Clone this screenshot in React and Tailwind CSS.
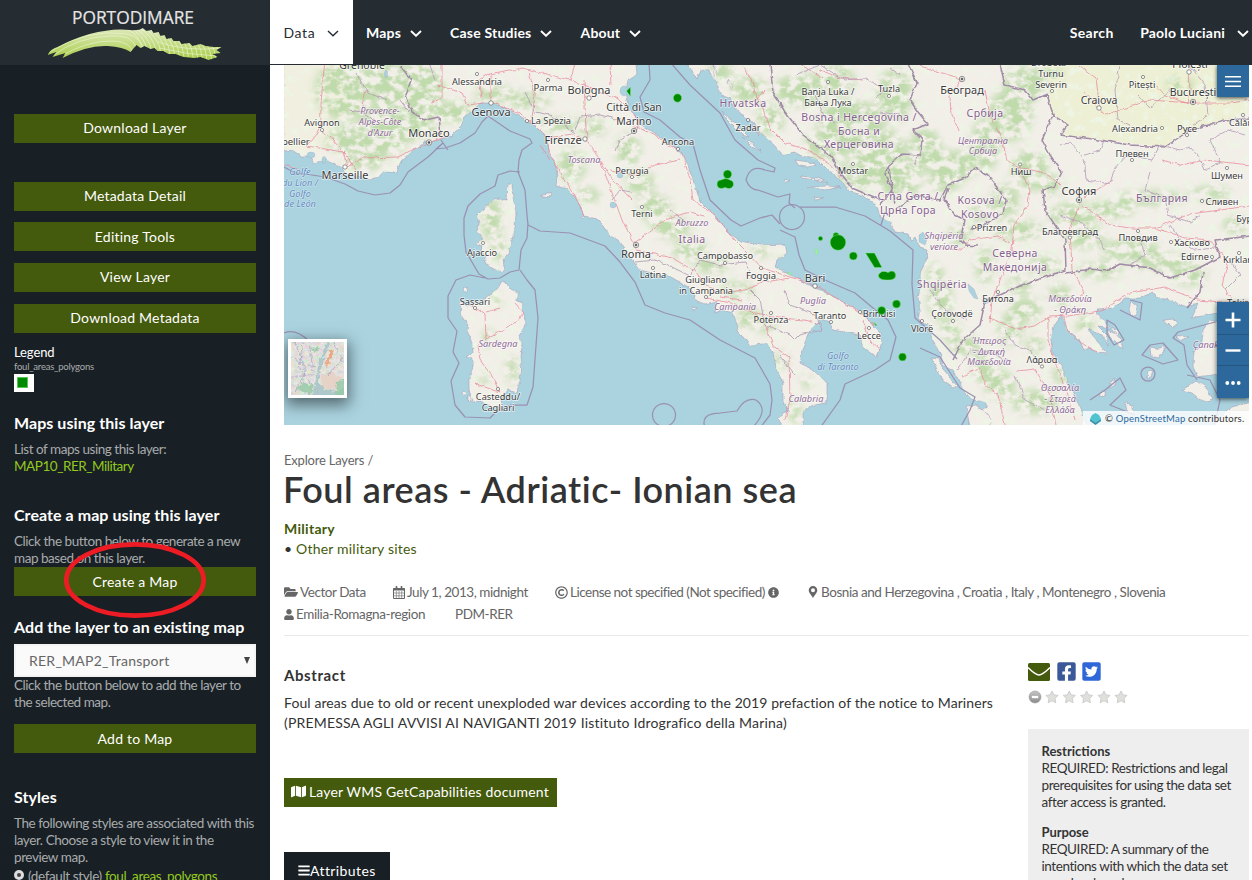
import React from "react";
import {
  FaFolderOpen, FaRegCopyright, FaInfoCircle, FaMap, FaFacebookSquare, FaTwitterSquare, FaBars, FaUser,
} from "react-icons/fa";

const LAND =
  "M284 60L284 151L292 150L301 156L309 156L314 163L325 160L334 164L341 166L347 174L356 177L371 179L378 177L384 172L397 172L401 161L410 153L417 147L424 142L431 142L451 136L460 127L466 116L481 103L492 103L504 107L517 114L527 121L534 126L544 134L548 144L549 154L554 161L556 167L557 177L556 186L567 189L574 196L581 207L584 216L597 219L604 226L610 236L618 240L623 248L630 257L640 270L652 273L660 278L667 275L680 282L688 287L695 294L694 299L705 304L717 301L715 313L722 310L733 313L738 327L737 331L743 337L750 346L767 343L773 352L776 368L783 383L783 403L790 410L777 418L782 426L803 426L803 412L813 405L827 403L827 383L813 370L800 363L802 350L810 330L820 320L829 321L833 330L860 335L863 347L877 357L882 343L880 333L860 312L840 300L813 287L790 275L775 267L777 261L787 253L785 244L760 245L740 241L727 231L713 214L700 201L690 171L684 156L678 151L663 139L640 124L628 106L625 91L627 80L637 74L636 64L636 60ZM685 60L690 68L697 80L701 70L709 71L716 83L722 95L730 97L733 105L744 117L754 122L760 133L773 144L783 155L794 153L806 157L818 160L830 172L841 180L849 191L864 196L877 206L880 217L890 222L895 232L908 234L911 241L915 237L920 247L928 251L926 261L920 273L921 287L918 297L920 310L918 318L922 323L930 326L932 340L941 355L943 365L953 371L960 383L963 390L973 400L985 402L988 408L975 409L968 419L970 428L1087 428L1083 415L1078 404L1074 393L1068 382L1062 367L1052 351L1051 338L1054 326L1062 315L1066 329L1079 339L1084 350L1090 348L1097 353L1107 354L1097 341L1088 329L1101 334L1108 345L1107 335L1098 326L1111 328L1120 342L1118 332L1107 325L1098 315L1097 309L1113 308L1125 298L1140 298L1153 292L1159 298L1170 300L1184 307L1198 304L1192 318L1217 313L1252 300L1252 60ZM1252 323L1210 321L1203 331L1202 343L1194 352L1193 366L1197 377L1212 375L1230 372L1252 374ZM1213 428L1227 410L1232 407L1252 402L1252 428Z";
const CORSICA =
  "M508 184L512 184L513 200L516 212L515 227L512 240L509 252L504 259L505 267L501 272L492 268L484 261L486 256L481 251L482 246L476 243L483 239L477 231L479 224L477 216L483 210L491 201L500 199L507 200Z";
const SARDINIA =
  "M502 281L508 283L510 289L518 292L517 301L523 303L522 311L526 323L519 335L522 342L521 358L520 379L517 393L508 390L501 399L502 406L493 408L481 401L472 402L469 388L469 378L473 367L473 359L466 357L473 352L472 341L467 331L468 322L460 316L461 300L466 306L478 304L490 295L498 288Z";
const ISLANDS =
  "M464 287l3 0l-1 6l-3 -3zM463 391l3 2l-2 3l-2 -3zM468 395l3 2l0 6l-3 -3zM540 196l6 -3l6 0l-1 4l-8 -1zM580 217l4 -1l0 3zM692 307l5 1l-3 2zM931 358l8 1l3 9l8 9l7 9l-4 2l-10 -7l-6 -12zM966 406l11 -1l9 8l6 8l-4 7h-18zM1107 330l9 4l5 6l2 9l-6 -5l-7 -7zM1131 302l6 3l0 8l-6 3l-2 -7zM1164 320l10 -1l4 4l-5 4l-7 -4zM1150 348l6 1l8 -3l0 6l-5 6l-8 -2zM1148 371l5 1l-2 5l-4 1zM1175 337l9 -2l4 2l-7 4zM1182 390l14 -9l10 6l7 12l-10 3l-11 -9zM1125 402l8 5l1 7l-7 -3zM1110 383l5 -5l0 5l-5 6zM1099 394l5 -3l2 3l-5 3zM795 160l14 2l7 3l-8 2l-9 -1zM783 180l7 -1l-5 4zM800 176l18 2l10 5l-12 -3l-15 -2zM808 187l19 -1l13 1l-15 3zM814 196l10 2l-8 2zM713 64l5 11l0 8l-4 -8zM728 79l5 7l-1 3l-5 -7zM722 111l14 13l13 13l-7 -2l-14 -14zM742 137l11 7l8 7l-9 -4z";

const GREENS = [
  [345, 90, 30, 30], [390, 85, 30, 22], [420, 90, 24, 26], [385, 130, 28, 24], [350, 140, 25, 14], [365, 160, 22, 10], [415, 125, 22, 15],
  [455, 112, 22, 10], [495, 94, 20, 8], [530, 100, 20, 9], [562, 125, 24, 7], [572, 165, 14, 16], [585, 195, 16, 7], [592, 128, 14, 8],
  [628, 150, 12, 16], [640, 182, 14, 12], [655, 208, 16, 14], [672, 228, 20, 10], [690, 250, 18, 9], [712, 265, 18, 8], [738, 290, 16, 8],
  [748, 318, 12, 10], [766, 325, 9, 8], [782, 360, 6, 8], [807, 382, 5, 7], [795, 412, 6, 12], [760, 252, 10, 5], [785, 262, 6, 6],
  [492, 220, 10, 22], [500, 250, 8, 12], [496, 300, 6, 6], [488, 338, 6, 8], [512, 370, 6, 14], [484, 380, 5, 6],
  [720, 72, 12, 10], [750, 90, 18, 14], [770, 120, 14, 14], [800, 90, 26, 16], [835, 80, 20, 14], [850, 120, 34, 20], [830, 145, 26, 14],
  [880, 150, 26, 22], [860, 175, 24, 14], [900, 180, 20, 20], [895, 95, 18, 26], [925, 150, 16, 22], [955, 165, 24, 14], [945, 180, 16, 12],
  [985, 145, 14, 26], [1010, 115, 22, 26], [1024, 85, 20, 18], [1045, 75, 18, 8], [1030, 170, 18, 20], [1005, 200, 14, 16],
  [1018, 230, 24, 10], [980, 212, 10, 10], [960, 235, 12, 10], [985, 265, 9, 18], [1050, 185, 12, 10], [1075, 215, 26, 12],
  [1110, 210, 24, 9], [1150, 198, 34, 7], [1210, 193, 22, 6], [1085, 238, 20, 10], [1130, 250, 30, 10], [1160, 262, 30, 8],
  [1100, 270, 22, 8], [1190, 275, 18, 10], [1045, 265, 18, 8], [1020, 285, 12, 9], [1025, 310, 16, 12], [1010, 330, 12, 16],
  [965, 345, 14, 10], [985, 365, 12, 18], [1000, 385, 15, 14], [1035, 345, 8, 10], [1062, 375, 10, 8], [1035, 402, 24, 12],
  [1060, 295, 12, 10], [1085, 325, 9, 9], [1235, 225, 12, 8], [1180, 85, 14, 8], [940, 300, 12, 20], [935, 275, 8, 12], [950, 330, 10, 10],
];

const ROADS =
  "M325 60C322 90 320 110 321 122C318 134 312 141 307 146L343 152L347 166L363 158L398 157L418 147L444 137M320 130L330 136L345 155M345 154L356 170M363 107L366 90M442 64L442 98L431 103M437 85L462 93L468 105L483 103L479 80L491 72L491 102L520 113L530 122L545 135L550 153L558 170L573 192L584 215M491 75L522 68L570 80L587 86L620 100L632 112L640 125M584 80L586 130L588 142L600 160L611 190L622 220L634 243M548 138L572 134L586 140M532 118L535 95L529 72M575 64L570 80M610 62L611 86M600 160L613 180L632 200M632 125L655 135L668 145L682 152L690 180L693 200L714 215L735 240L750 255L762 268L790 277L812 284L845 303L862 315L875 326M636 250L672 258L695 271L706 285L720 293L745 290L765 282L790 278M634 243L650 232L665 220L690 212L705 216M706 298L730 303L752 312L765 324L773 346L789 357L790 400L785 420M720 297L742 300M755 313L792 319L805 320L820 324M863 320L870 341L880 350M611 170L635 175L655 165L680 160M744 66L752 82L756 96L765 112L770 128L785 143L808 150L830 164L842 178M765 90L752 104M760 136L752 124M820 70L840 78L863 80M800 64L822 78M920 66L962 79L950 95L951 115L959 130M985 90L990 115L1001 135L1007 160L1020 170L1030 190L1028 205L1014 225L1012 250L1004 270L992 300L990 322M1018 167L1045 173L1060 184M1010 243L998 236L970 240L961 250L940 248M1084 92L1105 115L1150 100L1190 103L1230 103L1252 100M1100 110L1096 78L1080 66M1154 83L1165 95L1188 104L1190 90L1189 65M1080 200L1113 180M1080 202L1070 230L1072 270L1085 292L1078 298M1082 205L1110 225L1130 228L1155 228L1190 214L1250 206M1155 228L1185 238L1210 240L1228 262L1222 285L1232 300M990 318L1016 329L1034 326L1050 317L1068 316L1100 311L1130 293L1165 287L1197 300L1222 302M1048 317L1048 340L1058 370L1070 400L1075 420M1063 312L1067 330L1080 342L1096 352M963 376L980 368L985 385L998 395L1005 425M1017 371L1035 369L1050 395L1056 425M1162 160L1180 165L1205 160L1250 165M470 305L485 314L486 340L497 333L519 320L523 312L515 303M478 345L480 360L496 382L500 392L475 384M486 312L500 308M540 145L550 160M300 170L285 165";

const BORDERS =
  "M356 73L368 93L387 100M349 110L362 112L375 120M400 100L409 112M575 130L580 117L600 115L620 120M525 92L535 112L550 115L575 133M670 210L690 225M635 262L655 260L670 266L690 276L700 260L720 265L745 262L752 278M750 290L760 300L765 325L790 335L795 340L800 335L822 330L816 315L790 305L785 290M780 355L795 375M612 200L620 190L632 192M640 120L636 132L622 138L615 150";
const NATIONAL =
  "M400 65L411 80L406 95L412 112L425 120L439 117L441 135M770 64L773 92L785 112L803 135L830 155L840 172L852 188L880 200M880 205L893 190L885 175L889 165L902 154L920 155L922 140L913 130L928 124L918 112L910 100L917 82L908 64M889 168L895 205M895 210L915 195L940 200L948 185L965 178L975 168L988 175L1006 200L1003 213L990 222L970 230M948 188L944 200L955 215L965 220L960 240L965 245L978 246M1000 64L1005 85L1025 90L1033 100L1047 94L1053 115L1042 140L1050 155L1062 172L1055 186L1043 190L1045 210L1065 240L1066 270L1048 276L1015 288L985 302L980 325L963 340L953 360M1053 115L1068 125L1060 135L1093 139L1130 145L1165 147L1190 130L1225 120L1252 118M1066 273L1090 269L1107 271L1120 264L1150 268L1170 278L1195 270L1220 257L1215 240L1252 236M1203 273L1200 292L1187 308";
const REGIONAL =
  "M1060 145L1070 143L1080 152L1085 165L1086 180L1110 184L1114 170L1127 155L1152 160L1160 145L1180 150L1190 147L1200 158L1205 170L1220 162L1210 140L1228 130L1245 135M1105 138L1100 150L1085 155M1150 172L1145 190L1165 198L1168 215L1190 222L1200 215M1060 215L1080 222L1100 240L1105 250M1140 240L1145 255L1130 265M1170 225L1180 240L1195 250L1215 248M1120 66L1115 90L1118 120L1130 125M1190 66L1205 85L1208 115L1193 125M1138 95L1150 108L1170 90M1005 330L1015 345L1030 350L1040 365M958 370L970 350L990 352L1010 362M1015 375L1025 400L1045 410M795 75L820 65L845 80L865 78L885 90L875 98M900 115L880 112M900 75L890 68M815 95L825 118L835 123M420 60L430 65L435 80M930 290L945 310L968 320M920 150L915 165M1230 260L1240 275L1225 290";
const MARITIME =
  "M284 167L295 173L312 175L325 177L345 184L358 191L375 195L390 193L400 185L408 172L428 157L443 143L436 149L445 148L460 143L475 133L482 122L488 116M441 140L448 150M488 116L510 131L530 139L532 143L522 150L519 160L518 172L525 190L527 215L528 225L540 231L570 233L605 246L620 262L635 282L645 305L665 313L690 320L720 340L755 358L770 384L772 400L770 415L760 428M520 172L510 171L498 175L495 186L480 194L468 206L464 218L464 235L466 252L479 274L488 279L500 278L510 272L519 270L521 250L527 238L528 222M485 278L470 275L456 280L448 296L448 318L457 331L453 352L459 363L451 381L455 405L465 417L490 418L498 410L511 405L527 405L533 387L538 318L535 290L527 280L520 270M284 333Q295 328 308 340M649 62L650 80L640 97L644 112L660 120L680 137L693 144L700 170L710 200L731 220L741 226L760 218L772 215L780 224M670 62L690 85L720 113L735 140L758 160L775 168L774 172L765 170Q750 164 746 180Q750 190 758 190L778 197L790 194L789 203L795 208M800 207L835 207L865 216L890 231L913 250L912 284L915 318L940 340L957 359M780 230L795 237L799 255L805 270L825 280L855 293L873 308L888 320L896 337L890 360L875 370L845 384L840 400L820 428M881 225L885 212M920 348L940 357L960 388L975 397L970 410L960 428M705 428Q700 413 720 413L737 411Q745 397 756 400Q770 410 752 428M1107 320L1115 325L1124 340L1114 345L1107 334ZM1150 345L1142 355L1163 364L1178 360L1163 343ZM1197 380L1187 365L1184 345L1173 338L1178 332L1215 322M1187 375L1210 380L1220 400L1214 428M1120 310L1140 320L1142 303L1130 300M1090 400L1105 390L1120 378L1126 390L1110 405L1135 415";

const PLACES = [
  [362, 69, "Grenoble", 10.5], [477, 85, "Alessandria", 9.2], [548, 90.5, "Parma", 9.5], [589, 94, "Bologna", 11], [491, 116, "Genova", 11],
  [322, 126, "Avignon", 9.2], [429, 137, "Monaco", 11], [345, 178.5, "Marseille", 11], [551, 124, "La Spezia", 9.2], [563, 143.5, "Firenze", 11],
  [284, 145, "Montpellier", 9.5], [634, 111, "Città di San", 10.5], [634, 125, "Marino", 10.5], [678, 145, "Ancona", 9.2], [632, 174, "Perugia", 9.2],
  [642, 217, "Terni", 9.2], [636, 258, "Roma", 11], [748, 131, "Zadar", 9.2], [828, 94.5, "Banja Luka /", 9.2], [828, 105.5, "Бања Лука", 9.2],
  [889, 92, "Tuzla", 9.2], [853, 174, "Mostar", 9.2], [962, 94, "Београд", 11], [1051, 76.5, "Turnu", 9.2], [1051, 87.5, "Severin", 9.2],
  [1050, 66, "Drobeta-", 9.2], [1099, 104, "Craiova", 10.5], [1142, 88, "Pitești", 9.2], [1190, 68, "Ploiești", 10.5], [1193, 96, "București", 10.5],
  [1135, 132, "Alexandria", 9.2], [1187, 132, "Русе", 9.5], [1246, 126, "Călărași", 9.2], [1132, 157, "Плевен", 9.2], [1227, 179, "Шумен", 9.2],
  [1021, 175, "Ниш", 9.2], [1079, 195, "София", 11], [1222, 205, "Сливен", 9.2], [1251, 222, "Бургас", 9.2], [1070, 235, "Благоевград", 9.2],
  [1138, 241, "Пловдив", 9.2], [1192, 246, "Хасково", 9.2], [992, 231, "Prizren", 9.2], [1195, 260, "Edirne", 9.2], [1242, 263, "Kırklareli", 9.2],
  [1246, 306, "Tekirdağ", 9.5], [482, 255.5, "Ajaccio", 9.2], [475, 305, "Sassari", 9.2], [498, 400, "Casteddu/", 9.2], [498, 411, "Cagliari", 9.2],
  [653, 278, "Latina", 9.2], [725, 259, "Campobasso", 9.2], [706, 283, "Giugliano", 9.2], [706, 294, "in Campania", 9.2], [761, 279, "Foggia", 9.5],
  [815, 282, "Bari", 11], [771, 323, "Potenza", 9.2], [830, 318.5, "Taranto", 9.2], [879, 316.5, "Brindisi", 9.2], [869, 338.5, "Lecce", 9.2],
  [922, 332, "Vlorë", 9.2], [952, 317, "Çorovodë", 9.2], [998, 302, "Битола", 9.2], [1042, 363, "Λάρισα", 9.2],
];
const REGIONS = [
  [380, 114, "Provence-"], [380, 125, "Alpes-Côte"], [380, 135.5, "d'Azur"], [584, 162.5, "Toscana"], [692, 226, "Abruzzo"],
  [983, 143.5, "Централна"], [983, 154, "Србија"], [944, 239, "Shqipëria"], [944, 249.5, "veriore"], [498, 347, "Sardegna"],
  [735, 310, "Campania"], [813, 304, "Puglia"], [806, 402, "Calabria"], [1070, 302, "Μακεδονία"], [1070, 313, "- Θράκη"],
  [989, 343.5, "Ήπειρος"], [989, 354.5, "- Δυτική"], [989, 365, "Μακεδονία"], [1060, 391, "Θεσσαλία"], [1060, 402, "- Στερεά"],
  [1060, 412.5, "Ελλάδα"], [1214, 348, "Çanakkale"],
];
const COUNTRIES = [
  [743, 107, "Hrvatska"], [859, 121, "Bosna i Hercegovina /"], [859, 135, "Босна и"], [859, 148, "Херцеговина"], [692, 243, "Italia"],
  [908, 200, "Crna Gora /"], [908, 213.5, "Црна Гора"], [985, 117, "Србија"], [980, 204, "Kosova /"], [980, 217.5, "Kosovo"],
  [1162, 202, "България"], [1015, 257, "Северна"], [1015, 271, "Македонија"], [942, 288, "Shqipëria"],
];
const SEAS = [
  [300, 175, "Golfe"], [300, 186, "du Lion /"], [300, 196.5, "Golfo"], [300, 207, "de León"], [838, 358.5, "Golfo"], [838, 369.5, "di Taranto"],
];
const TOWNS = [
  [477, 74], [548, 80], [589, 98, 1], [491, 103, 1], [322, 130], [345, 167, 1], [527, 121], [585, 139, 1], [678, 149], [632, 177], [642, 207],
  [748, 120], [828, 82], [889, 96], [853, 164], [1052, 91], [1099, 108, 1], [1143, 77], [1189, 72, 1], [1162, 128], [1187, 135], [1243, 115],
  [1132, 160], [1227, 168], [1020, 164.5], [1202, 201], [1070, 237.5], [1138, 231], [1171, 242], [974, 227], [1212, 257], [1239, 253],
  [483, 243], [475, 308], [498, 389], [653, 268], [725, 263], [706, 297], [761, 268], [815, 286, 1], [771, 313], [831, 322], [860, 312],
  [869, 328], [922, 321], [953, 321], [998, 292], [1042, 366.5],
];
const CAPITALS = [[429, 142.5], [634, 131], [636, 245], [962, 79], [1193, 102], [1079, 200]];

function Labels({ items, className, size }) {
  return (
    <g className={className} textAnchor="middle" paintOrder="stroke" strokeLinejoin="round">
      {items.map(([x, y, t, s]) => (
        <text key={t + x + y} x={x} y={y} fontSize={s || size}>{t}</text>
      ))}
    </g>
  );
}

function MapCanvas() {
  return (
    <svg className="block h-[360px] w-[965px]" viewBox="284 65 965 360" fontFamily="'Noto Sans', sans-serif">
      <defs>
        <clipPath id="landClip"><path d={LAND} /><path d={CORSICA} /><path d={SARDINIA} /></clipPath>
        <filter id="coast" x="-2%" y="-2%" width="104%" height="104%">
          <feTurbulence type="fractalNoise" baseFrequency="0.16" numOctaves="2" seed="4" />
          <feDisplacementMap in="SourceGraphic" scale="4" xChannelSelector="R" yChannelSelector="G" />
        </filter>
        <filter id="forest" x="-5%" y="-5%" width="110%" height="110%">
          <feTurbulence type="fractalNoise" baseFrequency="0.1 0.13" numOctaves="4" seed="9" result="n" />
          <feColorMatrix in="n" type="matrix" values="0 0 0 0 0  0 0 0 0 0  0 0 0 0 0  0 4 0 0 -1.4" result="m" />
          <feGaussianBlur in="SourceGraphic" stdDeviation="5" result="b" />
          <feComposite in="b" in2="m" operator="in" />
        </filter>
        <filter id="speckle" x="0" y="0" width="100%" height="100%">
          <feTurbulence type="fractalNoise" baseFrequency="0.12" numOctaves="3" seed="21" />
          <feColorMatrix type="matrix" values="0 0 0 0 0.85  0 0 0 0 0.91  0 0 0 0 0.78  0 6 0 0 -3.4" />
        </filter>
      </defs>
      <rect x="284" y="65" width="965" height="360" fill="#aad3df" />
      <g filter="url(#coast)" fill="#f2efe9" stroke="#a49fb8" strokeWidth="0.6">
        <path d={LAND} /><path d={CORSICA} /><path d={SARDINIA} /><path d={ISLANDS} />
      </g>
      <g clipPath="url(#landClip)">
        <path d="M1045 64H1250V112L1225 120L1190 130L1165 147L1130 143L1060 135L1068 125L1050 112Z" fill="#eef0d5" />
        <path d="M284 64H340L350 100L330 150H284Z" fill="#eff0dc" opacity=".7" />
        <rect x="284" y="65" width="965" height="360" filter="url(#speckle)" />
        <g filter="url(#forest)" fill="#bfdaab">
          {GREENS.map(([x, y, a, b]) => <ellipse key={x + "-" + y} cx={x} cy={y} rx={a} ry={b} />)}
        </g>
      </g>
      <g fill="#aad3df" stroke="#a49fb8" strokeWidth=".3">
        <ellipse cx="311" cy="155" rx="4" ry="3" /><ellipse cx="324" cy="160" rx="2" ry="3.5" /><ellipse cx="613" cy="205" rx="3" ry="3" />
        <ellipse cx="620" cy="175" rx="3" ry="3" /><ellipse cx="386" cy="74" rx="1.5" ry="4" /><ellipse cx="624" cy="91" rx="4" ry="5" />
        <path d="M919 235l4-3l4 7l-2 6l-6-3zM968 284l6 5l4 10l-4 -1l-5 -7zM982 300l7-2l2 4l-7 2z" />
      </g>
      <g fill="none" strokeLinejoin="round" filter="url(#coast)">
        <path d={ROADS} stroke="#e8899b" strokeWidth=".9" opacity=".85" />
        <path d={REGIONAL} stroke="#b9a3bd" strokeWidth=".9" />
        <path d={BORDERS} stroke="#b39fb5" strokeWidth=".9" />
        <path d={NATIONAL} stroke="#a18ba6" strokeWidth="1.5" />
      </g>
      <g fill="none" stroke="#9a91b2" strokeWidth="1.25" strokeLinejoin="round">
        <path d={MARITIME} />
        <circle cx="792" cy="217" r="12.5" /><circle cx="664" cy="415" r="11.5" /><circle cx="1148" cy="374" r="7" />
      </g>
      <g fill="#fff" stroke="#666" strokeWidth=".7">
        {TOWNS.map(([x, y, b]) => <circle key={x + "t" + y} cx={x} cy={y} r={b ? 2.2 : 1.6} />)}
        {CAPITALS.map(([x, y]) => (
          <g key={x + "c" + y}><circle cx={x} cy={y} r="2.7" /><circle cx={x} cy={y} r="1.1" fill="#444" /></g>
        ))}
      </g>
      <Labels items={REGIONS} size={9.2} className="fill-[#8f6b98] stroke-white/60 stroke-[1.5px] italic" />
      <Labels items={SEAS} size={9.2} className="fill-[#6088c0] stroke-white/50 stroke-[1px] italic" />
      <Labels items={COUNTRIES} size={10.5} className="fill-[#85608e] stroke-white/60 stroke-[1.5px] tracking-[.4px]" />
      <Labels items={PLACES} size={9.2} className="fill-[#3a3a3a] stroke-white/70 stroke-[1.6px]" />
      <g fill="#008a00" stroke="#7ee87e" strokeWidth=".5">
        <circle cx="677.5" cy="98" r="4.2" /><circle cx="727.5" cy="174.3" r="4.2" />
        <path d="M717 184Q717 180 721 180Q723 179 725.5 178.5Q729 179 730 180Q734 181 733.5 185Q732 189 728 188.5L725 187.5L722 188.5Q717 188.5 717 184Z" />
        <circle cx="820.5" cy="238.5" r="2.2" /><circle cx="836" cy="235.5" r="3" /><circle cx="838" cy="242.5" r="7.8" /><circle cx="853.3" cy="256" r="4" />
        <path d="M865.5 253H874.5L882 267.5H874.5ZM882 271.5Q886 271 888 272.5Q892 270 894.5 272Q897 275 894.5 278.5Q891 280.5 887.5 280Q882 280 880 278.5Q876 275 882 271.5Z" />
        <circle cx="881.7" cy="310.5" r="4" /><circle cx="896.5" cy="304" r="4" /><circle cx="902.5" cy="357" r="3.9" />
        <path d="M626.5 91L630.5 87V96.5ZM873 322L877 325L876 326Z" />
        <path d="M815 249l2 0l1 5l-2 0zM788 272l3 1l-2 2z" fill="#9df79d" />
      </g>
    </svg>
  );
}

function MiniMap() {
  return (
    <svg className="block h-[53px] w-[53px]" viewBox="0 0 53 53">
      <defs>
        <filter id="city" x="0" y="0" width="100%" height="100%">
          <feTurbulence type="fractalNoise" baseFrequency="0.28" numOctaves="3" seed="3" />
          <feColorMatrix type="matrix" values="1.1 0 0 0 .28  0 .7 0 0 .46  0 0 .9 0 .36  0 0 0 0 1" />
        </filter>
        <filter id="streets">
          <feTurbulence type="fractalNoise" baseFrequency="0.3" numOctaves="2" seed="7" />
          <feDisplacementMap in="SourceGraphic" scale="6" xChannelSelector="R" yChannelSelector="G" />
        </filter>
      </defs>
      <rect width="53" height="53" fill="#d6d5c8" />
      <rect width="53" height="53" filter="url(#city)" opacity=".55" />
      <g filter="url(#streets)">
        <path d="M37 0L28 18L25 38L20 56H56V44L46 50L34 47L28 42L28 34L33 16L40 0Z" fill="#9fc0c4" opacity=".75" />
        <path d="M30 34L42 30L50 38L46 48L32 46Z" fill="#e6d2c6" />
        <path d="M39 8L34 24L36 26L43 8Z" fill="#f09a6c" opacity=".8" />
        <path d="M19 8Q24 3 29 6L25 10ZM5 47Q11 39 22 43L20 53ZM46 40L54 36V56H44Z" fill="#93c9a5" opacity=".8" />
        <path d="M0 14L14 25L26 23M4 0L15 30L2 52M36 34L54 14M12 0L8 25L20 42M0 36L22 32M42 0L52 20M18 0L22 28" stroke="#a3a6c4" strokeWidth=".7" fill="none" />
      </g>
    </svg>
  );
}

function Logo() {
  const ribs = [];
  for (let i = 0; i < 20; i++) {
    const x = 82 + i * 4.6;
    ribs.push(<path key={i} d={`M${x - 8} -2Q${x + 12} ${6 + i * 0.5} ${x + 13} ${24 + i * 0.5}`} />);
  }
  return (
    <svg className="block h-[65px] w-[270px]" viewBox="0 0 270 65">
      <defs>
        <linearGradient id="leaf" x2="0" y2="1"><stop stopColor="#dfe9bd" /><stop offset=".5" stopColor="#c2db80" /><stop offset="1" stopColor="#a5ca40" /></linearGradient>
        <clipPath id="wave"><path d="M0 27Q3 21 10 19Q25 11 42 6Q65 0 82 2Q92 3 95 0L99 3L104 2L106 5L111 4L113 8L117 7L119 11L124 10L126 13L132 13L134 16L142 15L145 18L153 16L158 18L166 19L174 19L169 22L173 25L165 26L170 29L161 32L153 29L147 30L136 29L128 26L121 26L116 23L110 23L107 20L103 21L97 18L93 20L89 17L83 24Q76 19 60 18Q40 17 15 30L18 25L5 29L9 24Z" /></clipPath>
      </defs>
      <text x="72" y="23.5" textLength="122" lengthAdjust="spacingAndGlyphs" fontFamily="'Open Sans', sans-serif" fontSize="19" fill="#e6e6e6" stroke="#e6e6e6" strokeWidth=".2">PORTODIMARE</text>
      <g transform="translate(47.5 28)" clipPath="url(#wave)">
        <rect width="175" height="33" fill="url(#leaf)" />
        <g fill="none" stroke="#f5f9e6" strokeWidth=".6">{ribs}</g>
        <g fill="none" stroke="#eef5d4" strokeWidth=".6">
          <path d="M5 28Q30 9 62 8Q85 6 89 20M2 24Q40 0 80 6Q93 10 96 20M12 29Q40 12 66 13Q83 14 85 24" />
          <path d="M110 14Q140 24 174 20M112 20Q140 27 170 28" />
        </g>
      </g>
    </svg>
  );
}

function Angle({ className = "", stroke = 2 }) {
  return (
    <svg className={`h-[7px] w-[12px] shrink-0 ${className}`} viewBox="0 0 12 7" fill="none" stroke="currentColor" strokeWidth={stroke}>
      <path d="M1 1L6 5.8L11 1" />
    </svg>
  );
}

function SideButton({ children, className = "pb-[2px]" }) {
  return <button className={`block h-[29px] w-[242px] shrink-0 bg-[#445a0c] text-center text-[14px] text-white tracking-[.22px] ${className}`}>{children}</button>;
}
function SideHeading({ children, className = "" }) {
  return <h4 className={`h-5 whitespace-nowrap text-[16px] font-bold leading-5 tracking-[.06px] text-white ${className}`}>{children}</h4>;
}

function Sidebar() {
  return (
    <aside className="flex h-[815px] w-[270px] shrink-0 flex-col overflow-hidden bg-[#192025] px-[14px] text-[13.5px] leading-[17px] tracking-[-.46px] text-[#a8abad] *:shrink-0">
      <SideButton className="mt-[49px] pb-[2px]">Download Layer</SideButton>
      <SideButton className="mt-[39px] pb-[2px]">Metadata Detail</SideButton>
      <SideButton className="mt-[11px]">Editing Tools</SideButton>
      <SideButton className="mt-3 pb-[2px]">View Layer</SideButton>
      <SideButton className="mt-3 pb-[2px]">Download Metadata</SideButton>
      <div className="mt-[11px] h-[17px] text-[13px] tracking-[-.1px] text-white">Legend</div>
      <div className="h-[13px] text-[9.5px] leading-[12px] tracking-[-.22px]">foul_areas_polygons</div>
      <div className="flex h-[18px] w-5 items-center bg-white pb-px pl-[3px]"><span className="h-[11px] w-[11px] border border-[#58c558] bg-[#008a00]" /></div>
      <SideHeading className="mt-[21px]">Maps using this layer</SideHeading>
      <p className="mt-[8px] whitespace-nowrap">List of maps using this layer:<br /><a className="text-[#93c91f]">MAP10_RER_Military</a></p>
      <SideHeading className="mt-[30px]">Create a map using this layer</SideHeading>
      <p className="mt-[8px] whitespace-nowrap">Click the button below to generate a new<br />map based on this layer.</p>
      <div className="relative">
        <SideButton className="pb-0">Create a Map</SideButton>
        <svg className="absolute left-[49px] top-[-26px] h-[78px] w-[144px]" viewBox="0 0 144 78">
          <ellipse cx="72" cy="39" rx="68.7" ry="35.7" fill="none" stroke="#ed1c24" strokeWidth="4.7" />
        </svg>
      </div>
      <SideHeading className="mt-[21px]">Add the layer to an existing map</SideHeading>
      <div className="mt-[7px] flex h-[33px] items-center justify-between border-2 border-[#f3f3f4] bg-[#fafafa] pl-[13px] pr-1 text-[14px] tracking-[.25px] text-[#666]">
        <span>RER_MAP2_Transport</span>
        <svg className="mb-px h-[7px] w-[6px]" viewBox="0 0 6 7"><path d="M0 0H6L3 7Z" fill="#444" /></svg>
      </div>
      <p className="whitespace-nowrap">Click the button below to add the layer to<br />the selected map.</p>
      <SideButton className="mt-[13px]">Add to Map</SideButton>
      <SideHeading className="mt-[34px]">Styles</SideHeading>
      <p className="mt-[8px] whitespace-nowrap tracking-[-.43px]">The following styles are associated with this<br />layer. Choose a style to view it in the<br />preview map.</p>
      <div className="mt-[2px] flex items-start gap-1 whitespace-nowrap tracking-[-.38px]">
        <span className="mt-[2px] flex h-[10px] w-[10px] items-center justify-center rounded-full bg-[#ddd]"><span className="h-1 w-1 rounded-full bg-[#444]" /></span>
        <span>(default style) <a className="text-[#93c91f]">foul_areas_polygons</a></span>
      </div>
    </aside>
  );
}

function NavItem({ children, className = "" }) {
  return (
    <a className={`flex items-center gap-[9px] whitespace-nowrap text-[14px] font-bold tracking-[.2px] text-white ${className}`}>
      {children}<Angle className="mt-[3px]" stroke={1.9} />
    </a>
  );
}

function Header() {
  return (
    <header className="flex h-[65px] bg-[#252c32]">
      <div className="w-[270px] shrink-0"><Logo /></div>
      <nav className="flex h-16 grow">
        <a className="flex h-16 w-[83px] items-center gap-[12px] bg-white pl-[13.5px] text-[14px] tracking-[.6px] text-[#252c32]">Data<Angle className="mt-[3px]" stroke={1.4} /></a>
        <NavItem className="ml-[13px]">Maps</NavItem>
        <NavItem className="ml-[28px]">Case Studies</NavItem>
        <NavItem className="ml-[28px]">About</NavItem>
        <div className="ml-auto flex pr-[3px]">
          <a className="flex items-center text-[14px] font-bold tracking-[.35px] text-white">Search</a>
          <NavItem className="ml-[26.5px] gap-[12px]">Paolo Luciani</NavItem>
        </div>
      </nav>
    </header>
  );
}

function CalendarIcon() {
  return (
    <svg className="h-[13px] w-3" viewBox="0 0 12 13" fill="none" stroke="#666">
      <path d="M.5 2.5H11.5V12.5H.5Z" /><path d="M0 3.5H12" strokeWidth="2" />
      <path d="M3.5 0V3M8.5 0V3" strokeWidth="1.6" /><path d="M0 7H12M0 9.8H12M3.3 5V12M6 5V12M8.7 5V12" strokeWidth=".6" />
    </svg>
  );
}

function Rating() {
  return (
    <svg className="block h-4 w-[102px]" viewBox="0 0 102 16">
      <defs><linearGradient id="knob" x2="0" y2="1"><stop stopColor="#c5c5c5" /><stop offset="1" stopColor="#8b8b8b" /></linearGradient></defs>
      <circle cx="7" cy="8" r="6" fill="url(#knob)" stroke="#999" strokeWidth=".6" />
      <rect x="3.5" y="6.5" width="7" height="3" rx="1" fill="#fff" stroke="#999" strokeWidth=".5" />
      {[24, 41.3, 58.6, 76, 93].map((x) => (
        <path key={x} transform={`translate(${x} 8)`} d="M0 -6L1.900 -2.200L6 -1.600L3.100 1.400L3.800 5.800L0 3.800L-3.800 5.800L-3.100 1.400L-6 -1.600L-1.900 -2.200Z" fill="#dfdfdc" stroke="#c2c2c2" strokeWidth=".7" />
      ))}
    </svg>
  );
}

function Metadata() {
  return (
    <div className="mt-[22px] whitespace-nowrap text-[13.5px] leading-[22px] tracking-[-.44px] text-[#666]">
      <div className="flex h-[22px] items-center">
        <div className="flex w-[109px] items-center gap-[2px]"><FaFolderOpen className="h-[14px] w-[14px]" />Vector Data</div>
        <div className="flex w-[162px] items-center gap-[2px]"><CalendarIcon />July 1, 2013, midnight</div>
        <div className="flex w-[253px] items-center gap-[2px] tracking-[-.5px]"><FaRegCopyright className="h-[13px] w-[13px]" />License not specified (Not specified)<FaInfoCircle className="ml-[1px] h-[11px] w-[11px]" /></div>
        <div className="flex items-center gap-[3px]">
          <svg className="h-3 w-[10px]" viewBox="0 0 10 12"><path fillRule="evenodd" fill="#666" d="M5 0A4.3 4.3 0 0 1 9.3 4.3C9.3 7 6 10 5 12C4 10 .7 7 .7 4.3A4.3 4.3 0 0 1 5 0ZM5 2.3A2 2 0 1 0 5 6.3A2 2 0 1 0 5 2.3Z" /></svg>
          Bosnia and Herzegovina , Croatia , Italy , Montenegro , Slovenia
        </div>
      </div>
      <div className="flex h-[22px] items-center">
        <div className="flex w-[171px] items-center gap-[2px] tracking-[-.38px]"><FaUser className="h-[11px] w-[10px]" />Emilia-Romagna-region</div>
        <span>PDM-RER</span>
      </div>
    </div>
  );
}

function MapPanel() {
  return (
    <div className="relative h-[360px] w-[965px] shrink-0 overflow-hidden">
      <MapCanvas />
      <div className="absolute bottom-[27px] left-1 border-[3px] border-white shadow-[0_5px_14px_2px_rgba(0,0,0,.5)]"><MiniMap /></div>
      <button className="absolute right-0 top-0 flex h-8 w-8 items-center justify-center bg-[#2c689c] shadow-[0_1px_4px_rgba(0,0,0,.7)]">
        <svg className="h-4 w-4" viewBox="0 0 16 16" stroke="#fff" strokeWidth="1.5"><path d="M0 3.7H16M0 8.5H16M0 13.3H16" /></svg>
      </button>
      <div className="absolute right-0 top-[237px] flex w-8 flex-col shadow-[0_1px_5px_rgba(0,0,0,.7)]">
        <button className="flex h-8 items-center justify-center bg-[#2c689c] pt-[3px]"><svg className="h-4 w-4" viewBox="0 0 16 16" stroke="#fff" strokeWidth="2.6"><path d="M.5 8H15.500M8 .5V15.500" /></svg></button>
        <button className="flex h-8 items-center justify-center border-y border-[#245681] bg-[#2c689c]"><svg className="h-4 w-4" viewBox="0 0 16 16" stroke="#fff" strokeWidth="2.4"><path d="M.5 8.5H15.500" /></svg></button>
        <button className="flex h-8 items-center justify-center bg-[#2c689c]"><svg className="h-4 w-4" viewBox="0 0 16 16" fill="#fff"><circle cx="2.3" cy="9" r="1.900" /><circle cx="8" cy="9" r="1.900" /><circle cx="13.7" cy="9" r="1.900" /></svg></button>
      </div>
      <div className="absolute bottom-0 right-0 flex h-[14px] w-[166px] items-center gap-1 whitespace-nowrap bg-white/80 pl-[7px] pt-px text-[9.5px] leading-[14px] tracking-[.22px] text-[#333]">
        <svg className="h-3 w-[11px] shrink-0" viewBox="0 0 11 12"><path d="M0 6L5.5 9L11 6V8L5.5 12L0 8Z" fill="#3990a8" /><path d="M2 2L5.5 0L9 2L11 6L5.5 10L0 6Z" fill="#4fc3cf" /></svg>
        <span>© <a className="text-[#2c689c]">OpenStreetMap</a> contributors.</span>
      </div>
    </div>
  );
}

export default function App() {
  return (
    <div className="h-[880px] w-[1252px] overflow-hidden bg-white font-['Lato',sans-serif]">
      <Header />
      <div className="flex">
        <Sidebar />
        <main className="flex h-[815px] w-[982px] flex-col overflow-hidden pl-[14px] text-[14px] text-[#333] *:shrink-0">
          <MapPanel />
          <div className="mt-[26px] h-[18px] whitespace-nowrap text-[13px] leading-[18px] tracking-[-.2px] text-[#666]">Explore Layers /</div>
          <h1 className="-ml-px h-[42px] whitespace-nowrap text-[36px] font-semibold leading-[41px] tracking-[.52px] text-[#333]">Foul areas - Adriatic- Ionian sea</h1>
          <div className="mt-2 leading-5">
            <div className="font-bold tracking-[.3px] text-[#445a0c]">Military</div>
            <div className="tracking-[.2px]">• <a className="text-[#445a0c]">Other military sites</a></div>
          </div>
          <Metadata />
          <div className="mt-[10px] h-px w-[965px] bg-[#e9e9e9]" />
          <div className="flex">
            <section className="w-[744px] shrink-0 whitespace-nowrap pt-[28px]">
              <h3 className="text-[15px] font-bold leading-[22px] tracking-[.6px]">Abstract</h3>
              <p className="mt-[7px] leading-5"><span className="tracking-[.09px]">Foul areas due to old or recent unexploded war devices according to the 2019 prefaction of the notice to Mariners</span><br /><span className="tracking-[.19px]">(PREMESSA AGLI AVVISI AI NAVIGANTI 2019 Iistituto Idrografico della Marina)</span></p>
              <button className="mt-[45px] flex h-[29px] w-[273px] items-center gap-[3px] bg-[#445a0c] pb-[2px] pl-[7px] tracking-[.17px] text-white"><FaMap className="h-[15px] w-[15px]" />Layer WMS GetCapabilities document</button>
              <button className="mt-[45px] flex h-[38px] w-[106px] items-center bg-[#192025] pb-[2px] pl-[14px] tracking-[.4px] text-white"><FaBars className="h-[13px] w-3" />Attributes</button>
            </section>
            <aside className="w-[221px] shrink-0 pt-[26px]">
              <div className="flex h-5 items-center">
                <svg className="h-[18px] w-[22px]" viewBox="0 0 22 18"><rect width="22" height="18" rx="1.5" fill="#445a0c" /><path d="M0 4.5C4 8.5 8 12 11 12S18 8.500 22 4.500" fill="none" stroke="#fff" strokeWidth="1.5" /></svg>
                <FaFacebookSquare className="mb-px ml-[6px] h-[21px] w-[21px] text-[#3b5998]" />
                <FaTwitterSquare className="mb-px ml-1 h-[21px] w-[21px] text-[#2f67d8]" />
              </div>
              <div className="mt-[7px]"><Rating /></div>
              <div className="mt-6 h-[200px] whitespace-nowrap bg-[#eee] pl-[13.5px] pt-[14px] text-[13.5px] leading-[17px] tracking-[-.42px]">
                <b className="text-[13px] tracking-normal">Restrictions</b><br />REQUIRED: Restrictions and legal<br />prerequisites for using the data set<br />after access is granted.
                <div className="mt-[13px]"><b className="text-[13px] tracking-[-.1px]">Purpose</b><br />REQUIRED: A summary of the<br />intentions with which the data set<br />was developed.</div>
              </div>
            </aside>
          </div>
        </main>
      </div>
    </div>
  );
}
